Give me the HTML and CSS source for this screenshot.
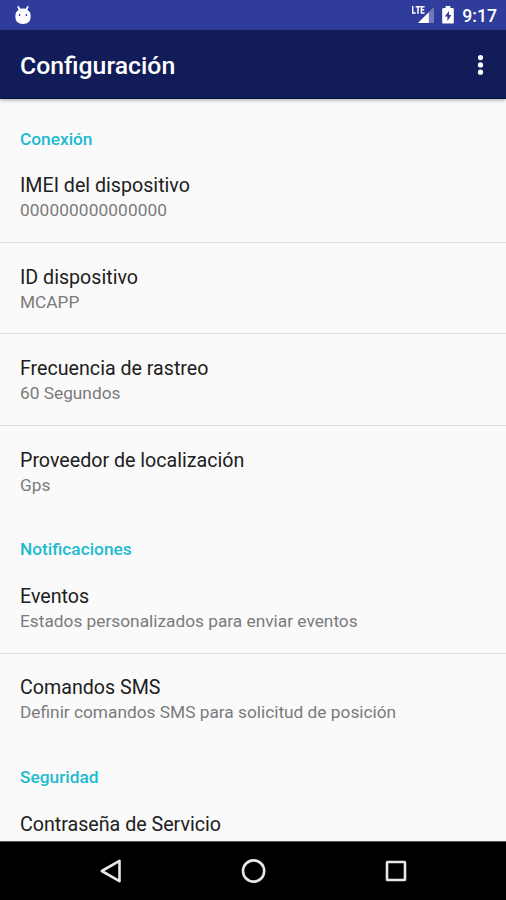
FILE: index.html
```html
<!DOCTYPE html>
<html lang="es">
<head>
<meta charset="utf-8">
<title>Configuración</title>
<link rel="stylesheet" href="styles.css">
</head>
<body>
<div class="screen">
  <div class="status">
    <svg class="bot" width="18" height="20" viewBox="0 0 18 20"><path fill="#fff" d="M3.2 1.400l1.200-.6 2 2.900q2.600-.6 5.200 0l2-2.900 1.200.6-1.400 3.500q3.200 1.800 3.200 5.300v1.700q0 7-7.600 7t-7.600-7v-1.700q0-3.500 3.200-5.300z"/><g fill="#303c9c"><circle cx="5.600" cy="10" r=".9"/><circle cx="12.400" cy="10" r=".9"/></g></svg>
    <div class="indicators">
      <svg class="signal" width="24" height="20" viewBox="0 0 24 20"><path fill="#7079bc" d="M22 2v16H6z"/><path fill="#fff" d="M16.800 7.200V18H6z"/><path fill="#303c9c" d="M0 0h13.300v10H0z"/><path fill="none" stroke="#fff" stroke-width="1.500" d="M.7 1v7h3M3.700 1.700h4.600M6 1.700v7M12.600 1.700H9.400v6.400h3.200M9.400 4.800h2.800"/></svg>
      <svg class="battery" width="12" height="18" viewBox="0 0 12 18"><path fill="#fff" d="M3.600 0h4.800v2h2.200q1.200 0 1.200 1.200v13.200q0 1.200-1.200 1.200H1.400Q.2 17.600.2 16.400V3.200Q.2 2 1.400 2h2.200z"/><path fill="#303c9c" d="M7 5L2.800 10.600h2.600V15l4-6H7z"/></svg>
      <span class="clock">9:17</span>
    </div>
  </div>
  <header class="appbar">
    <h1>Configuración</h1>
    <svg width="8" height="22" viewBox="0 0 8 22"><g fill="#fff"><circle cx="4.500" cy="3.600" r="2.600"/><circle cx="4.500" cy="10.900" r="2.600"/><circle cx="4.500" cy="18.200" r="2.600"/></g></svg>
  </header>
  <main class="list">
    <h2>Conexión</h2>
    <div class="row divided"><div class="title">IMEI del dispositivo</div><div class="summary digits">000000000000000</div></div>
    <div class="row divided"><div class="title">ID dispositivo</div><div class="summary">MCAPP</div></div>
    <div class="row divided"><div class="title">Frecuencia de rastreo</div><div class="summary">60 Segundos</div></div>
    <div class="row"><div class="title">Proveedor de localización</div><div class="summary">Gps</div></div>
    <h2>Notificaciones</h2>
    <div class="row divided"><div class="title">Eventos</div><div class="summary">Estados personalizados para enviar eventos</div></div>
    <div class="row"><div class="title">Comandos SMS</div><div class="summary">Definir comandos SMS para solicitud de posición</div></div>
    <h2>Seguridad</h2>
    <div class="row"><div class="title">Contraseña de Servicio</div></div>
  </main>
  <nav class="navbar">
    <svg width="26" height="26" viewBox="0 0 26 26"><path d="M21.500 2.800v20.400L3.800 13z"/></svg>
    <svg width="26" height="26" viewBox="0 0 26 26"><circle cx="12.600" cy="13" r="10.600"/></svg>
    <svg width="26" height="26" viewBox="0 0 26 26"><rect x="4" y="4" width="18" height="18" rx=".5"/></svg>
  </nav>
</div>
</body>
</html>
```
FILE: styles.css
```css
* { box-sizing: border-box; }
body {
  margin: 0;
  font-family: Roboto, "Liberation Sans", sans-serif;
  background: #fafafa;
}
svg { display: block; flex: none; }
h1, h2 { margin: 0; font-weight: 500; }
.screen {
  width: 506px;
  height: 900px;
  display: flex;
  flex-direction: column;
  overflow: hidden;
}
.status {
  flex: none;
  height: 30px;
  padding: 0 9px 0 14px;
  display: flex;
  justify-content: space-between;
  align-items: center;
  background: #303c9c;
  color: #fff;
}
.bot { margin-bottom: 1px; }
.indicators { display: flex; align-items: center; }
.signal { margin-right: 6px; }
.battery { margin-right: 8px; }
.clock { font-size: 17.7px; font-weight: 500; line-height: 30px; padding-top: 2px; }
.appbar {
  flex: none;
  height: 69px;
  padding: 2px 22px 0 20px;
  display: flex;
  justify-content: space-between;
  align-items: center;
  background: #111c58;
  border-bottom: 1px solid #080d42;
  box-shadow: 0 1px 4px rgba(0, 0, 0, .35);
  z-index: 1;
}
.appbar h1 { font-size: 24.8px; line-height: 30px; padding-top: 1px; color: #fff; }
.list {
  flex: 1;
  min-height: 0;
  padding-top: 7.7px;
  overflow: hidden;
}
.list h2 {
  height: 45px;
  padding: 20px 20px 0;
  font-size: 17.3px;
  line-height: 24px;
  color: #20bacf;
}
.row { height: 91.4px; padding: 21.7px 20px 0; }
.divided { border-bottom: 1.5px solid #dedede; }
.title { font-size: 19.65px; line-height: 26px; color: #202020; }
.summary { font-size: 17.3px; line-height: 24px; margin-top: -1px; color: #7b7b7b; }
.digits { letter-spacing: .1px; }
.navbar {
  flex: none;
  height: 59px;
  padding: 0 97px 0 98px;
  display: flex;
  justify-content: space-between;
  align-items: center;
  background: #000;
  border-top: 1px solid #555;
}
.navbar svg {
  fill: none;
  stroke: #e8e8e8;
  stroke-width: 2.6;
  stroke-linejoin: round;
}
```
